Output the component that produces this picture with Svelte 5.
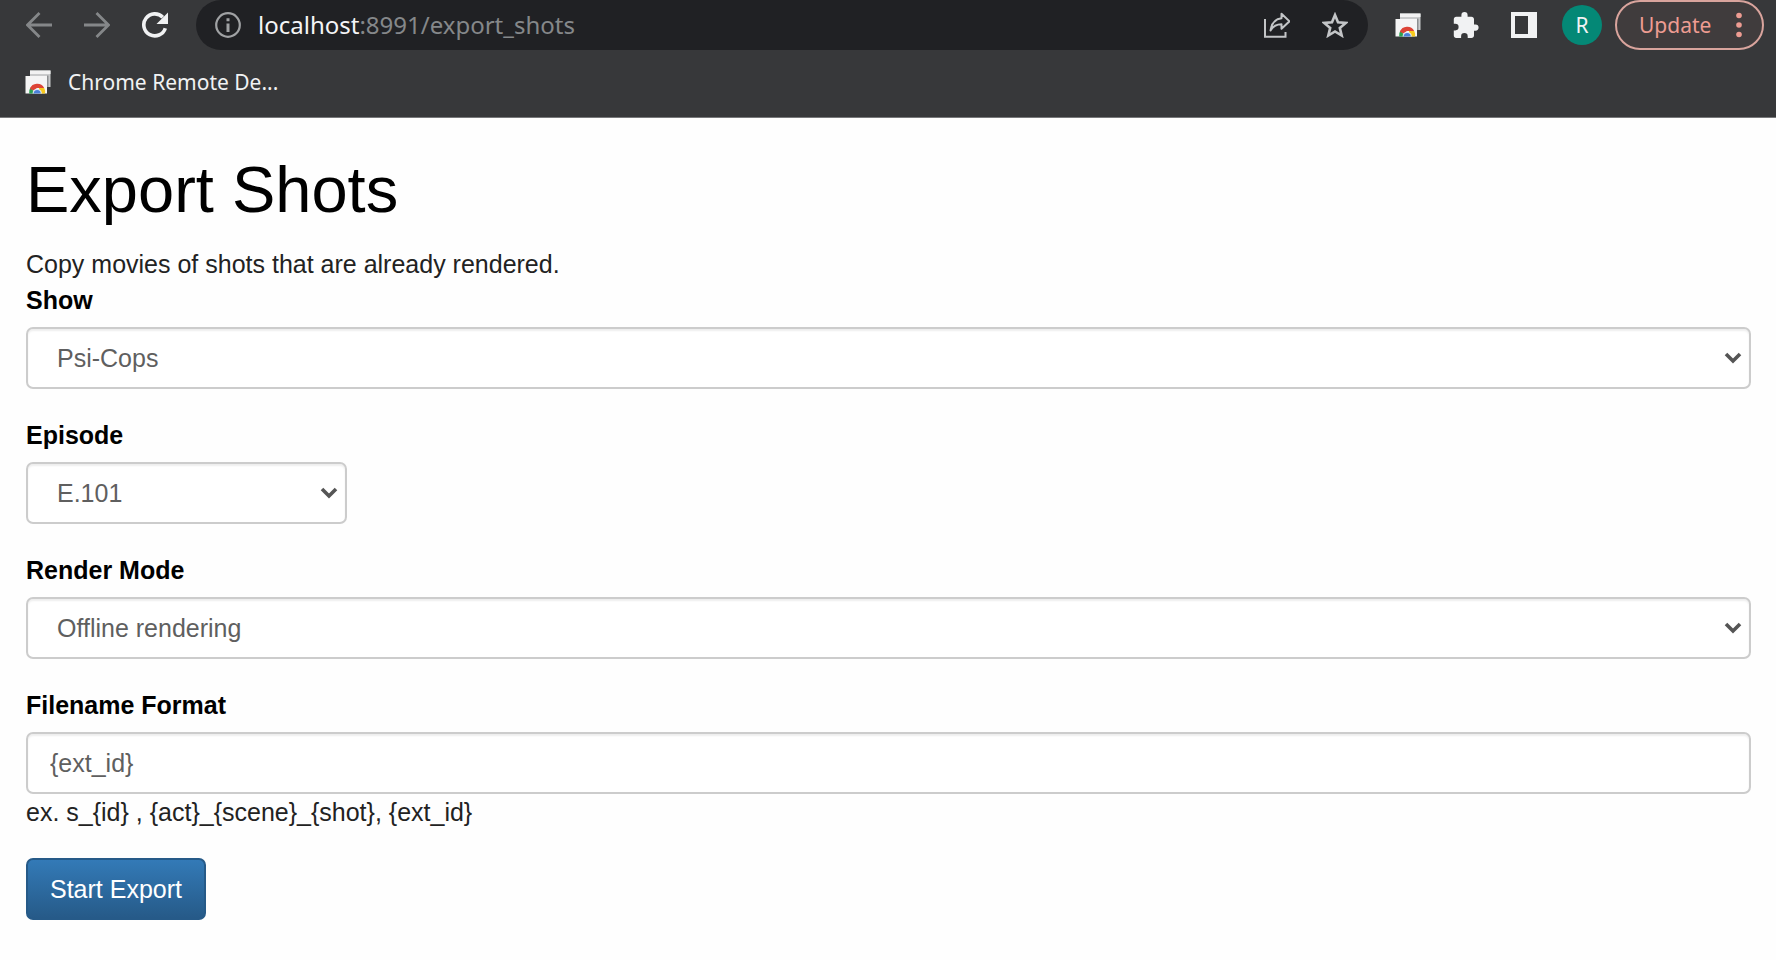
<script>
  let show = $state("Psi-Cops");
  let episode = $state("E.101");
  let renderMode = $state("Offline rendering");
  let filenameFormat = $state("{ext_id}");

  const hint = "ex. s_{id} , {act}_{scene}_{shot}, {ext_id}";
</script>

{#snippet remoteIcon()}
  <svg class="icon" viewBox="0 0 26 26" aria-hidden="true">
    <path d="M5 1.5h20.500V18H5z" fill="#c9cacb" />
    <path d="M5 1.5h20.500v3.500H5z" fill="#f2f2f2" />
    <path d="M22 6.500h1.500V18H22z" fill="#8d8f91" />
    <path d="M.5 7H22v17.500H.5z" fill="#f5f5f5" />
    <path d="M4.200 24.500a7.800 7.800 0 0 1 1.600-6.300l4.200 6.300z" fill="#2da252" />
    <path d="M4.800 19.800a8 8 0 0 1 14.400-.8H12l-3.500 2.500z" fill="#dd4436" />
    <path d="M14 19h5.200a8 8 0 0 1 .8 5.500h-6z" fill="#f8c91c" />
    <path d="M7.500 24.500a4.700 4.700 0 1 1 9.400 0z" fill="#dfe8f5" />
    <path d="M8.700 24.500a3.500 3.500 0 1 1 7 0z" fill="#4a80d8" />
  </svg>
{/snippet}

{#snippet chevron()}
  <svg class="chevron" viewBox="0 0 18 12" aria-hidden="true">
    <path d="M2 2l7 7 7-7" fill="none" stroke="#555" stroke-width="3.600" />
  </svg>
{/snippet}

<header class="browser">
  <div class="toolbar">
    <nav class="nav" aria-label="Browser">
      <button class="tool dim" aria-label="Back">
        <svg class="icon" viewBox="0 0 26 26">
          <path d="M26 13H2M13.500 1L1.500 13l12 12" fill="none" stroke="currentColor" stroke-width="2.800" />
        </svg>
      </button>
      <button class="tool dim" aria-label="Forward">
        <svg class="icon" viewBox="0 0 26 26">
          <path d="M0 13h24M12.500 1l12 12-12 12" fill="none" stroke="currentColor" stroke-width="2.800" />
        </svg>
      </button>
      <button class="tool" aria-label="Reload">
        <svg class="icon" viewBox="0 0 26 26">
          <path d="M23.300 16.200A11 11 0 1 1 20.800 5.300" fill="none" stroke="currentColor" stroke-width="3.600" />
          <path d="M26 .5V12H14.500z" fill="currentColor" />
        </svg>
      </button>
    </nav>

    <div class="omnibox">
      <svg class="icon info" viewBox="0 0 26 26" aria-hidden="true">
        <circle cx="13" cy="13" r="11.800" fill="none" stroke="currentColor" stroke-width="2.200" />
        <path d="M11.500 6.200h3v3h-3zM11.500 11.500h3V20h-3z" fill="currentColor" />
      </svg>
      <span class="url"><b>localhost</b>:8991/export_shots</span>
      <button class="tool soft" aria-label="Share">
        <svg class="icon" viewBox="0 0 26 26">
          <path d="M1 7v17.800h20.500V20" fill="none" stroke="currentColor" stroke-width="2" />
          <path d="M6.500 18.500C7.500 11.500 11 7 17.500 6.200V1.800L25.500 9.300l-8 7.500v-4.500c-5 0-8.500 1.700-11 6.200z" fill="none" stroke="currentColor" stroke-width="2" stroke-linejoin="round" />
        </svg>
      </button>
      <button class="tool soft" aria-label="Bookmark this page">
        <svg class="icon" viewBox="0 0 26 26">
          <path d="M13 3l3 7.300 7.800.6-6 5 1.900 7.600L13 19.400l-6.700 4.100 1.900-7.600-6-5 7.800-.6z" fill="none" stroke="currentColor" stroke-width="2.600" />
        </svg>
      </button>
    </div>

    <div class="extensions">
      <button class="tool" aria-label="Chrome Remote Desktop">{@render remoteIcon()}</button>
      <button class="tool" aria-label="Extensions">
        <svg class="icon" viewBox="0 0 26 26">
          <path d="M22.500 12.500H21V7.200C21 5.800 19.900 4.700 18.500 4.700H14.600V3.200a3.100 3.100 0 0 0-6.200 0v1.500H3.200C1.800 4.700.8 5.800.8 7.200v4.600h1.500a3.300 3.300 0 0 1 0 6.600H.8v5c0 1.400 1 2.500 2.400 2.500h4.900v-1.500a3.300 3.300 0 0 1 6.600 0v1.500h3.800c1.400 0 2.500-1.100 2.500-2.500v-4.700h1.500a3.100 3.100 0 0 0 0-6.200z" fill="currentColor" />
        </svg>
      </button>
      <button class="tool" aria-label="Side panel">
        <svg class="icon" viewBox="0 0 26 26">
          <path d="M0 0h26v26H0zM4 4v18h13V4z" fill="currentColor" fill-rule="evenodd" />
        </svg>
      </button>
    </div>

    <button class="avatar" aria-label="Profile">R</button>
    <button class="update">
      Update
      <svg class="dots" viewBox="0 0 6 26" aria-hidden="true">
        <circle cx="3" cy="3.500" r="2.800" />
        <circle cx="3" cy="13" r="2.800" />
        <circle cx="3" cy="22.500" r="2.800" />
      </svg>
    </button>
  </div>

  <div class="bookmarks">
    <a href="#remote">{@render remoteIcon()}Chrome Remote De...</a>
  </div>
</header>

<main>
  <h1>Export Shots</h1>
  <p>Copy movies of shots that are already rendered.</p>

  <form onsubmit={(e) => e.preventDefault()}>
    <div class="group">
      <label for="show">Show</label>
      <div class="select">
        <select id="show" bind:value={show}>
          <option>Psi-Cops</option>
        </select>
        {@render chevron()}
      </div>
    </div>

    <div class="group">
      <label for="episode">Episode</label>
      <div class="select short">
        <select id="episode" bind:value={episode}>
          <option>E.101</option>
        </select>
        {@render chevron()}
      </div>
    </div>

    <div class="group">
      <label for="mode">Render Mode</label>
      <div class="select">
        <select id="mode" bind:value={renderMode}>
          <option>Offline rendering</option>
        </select>
        {@render chevron()}
      </div>
    </div>

    <div class="group">
      <label for="format">Filename Format</label>
      <input id="format" type="text" bind:value={filenameFormat} />
      <p>{hint}</p>
    </div>

    <button class="submit" type="submit">Start Export</button>
  </form>
</main>

<style>
  :global(body) {
    margin: 0;
    background: #fefefe;
  }

  .browser {
    background: #37383a;
    border-bottom: 1px solid #77787a;
    font-family: "Noto Sans", sans-serif;
    font-size: 21px;
    color: #f1f2f3;
  }

  .browser button {
    font: inherit;
    cursor: pointer;
  }

  .toolbar {
    display: flex;
    align-items: center;
    height: 50px;
    padding: 0 12px 0 26px;
  }

  .nav {
    display: flex;
    gap: 32px;
    margin-right: 28px;
  }

  .tool {
    display: flex;
    padding: 0;
    border: none;
    background: none;
    color: #f1f2f3;
  }

  .dim {
    color: #858789;
  }

  .soft {
    color: #c3c5c7;
  }

  .icon {
    display: block;
    flex: none;
    width: 26px;
    height: 26px;
  }

  .omnibox {
    flex: 1;
    display: flex;
    align-items: center;
    gap: 32px;
    height: 50px;
    box-sizing: border-box;
    padding: 0 20px 0 19px;
    border-radius: 25px;
    background: #202124;
  }

  .info {
    margin-right: -15px;
    color: #a0a2a4;
  }

  .url {
    flex: 1;
    font-size: 24px;
    line-height: 32px;
    color: #85888a;
  }

  .url b {
    font-weight: 400;
    color: #f4f5f6;
  }

  .extensions {
    display: flex;
    gap: 32px;
    margin: 0 25px 0 27px;
  }

  .avatar {
    width: 40px;
    height: 40px;
    padding: 0;
    border: none;
    border-radius: 50%;
    background: #048876;
    color: #f1f2f3;
  }

  .update {
    display: flex;
    align-items: center;
    justify-content: space-between;
    width: 149px;
    height: 50px;
    margin-left: 13px;
    padding: 0 20px 0 22px;
    border: 2px solid #d9a49d;
    border-radius: 25px;
    background: #403c3d;
    color: #ee9c92;
  }

  .dots {
    width: 6px;
    height: 26px;
    fill: currentColor;
  }

  .bookmarks {
    padding-left: 25px;
    padding-bottom: 3px;
  }

  .bookmarks a {
    display: flex;
    align-items: center;
    gap: 17px;
    width: fit-content;
    height: 64px;
    color: inherit;
    text-decoration: none;
  }

  main {
    padding: 36px 25px 36px 26px;
    font-family: "Liberation Sans", Arial, sans-serif;
    font-size: 25px;
    line-height: 36px;
    color: #222;
  }

  h1 {
    margin: 0 0 20px;
    font-size: 65px;
    font-weight: 400;
    line-height: 72px;
    color: #000;
  }

  p {
    margin: 0;
  }

  .group {
    margin-bottom: 28px;
  }

  label {
    display: block;
    width: fit-content;
    margin-bottom: 9px;
    font-weight: 700;
    color: #000;
  }

  .select {
    position: relative;
  }

  .short {
    width: 321px;
  }

  select,
  input {
    display: block;
    width: 100%;
    height: 62px;
    box-sizing: border-box;
    padding: 0 22px;
    border: 2px solid #ccc;
    border-radius: 7px;
    background: #fff;
    box-shadow: inset 0 2px 2px rgba(0, 0, 0, 0.07);
    color: #5f5f5f;
    font: inherit;
  }

  select {
    appearance: none;
    padding: 0 44px 0 29px;
  }

  .chevron {
    position: absolute;
    right: 9px;
    top: 25px;
    width: 18px;
    height: 12px;
    pointer-events: none;
  }

  .submit {
    display: block;
    height: 62px;
    padding: 0 22px;
    border: 2px solid #265a88;
    border-radius: 7px;
    background: linear-gradient(#337ab7, #265a88);
    color: #fff;
    font: inherit;
    cursor: pointer;
  }
</style>
